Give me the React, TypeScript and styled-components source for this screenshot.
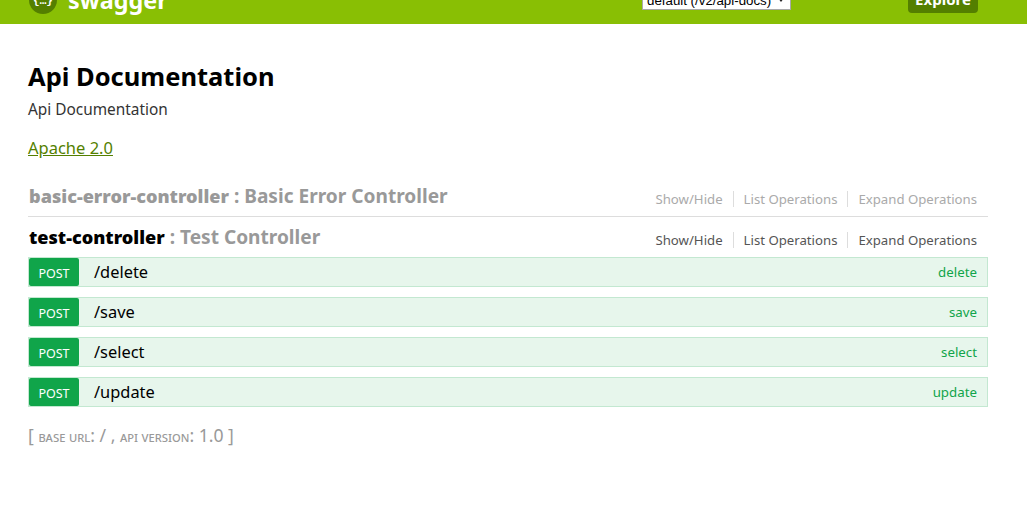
import React from 'react'
import styled, { createGlobalStyle } from 'styled-components'

const GlobalStyle = createGlobalStyle`
  html, body {
    margin: 0;
    padding: 0;
    background: #ffffff;
    font-family: "Noto Sans", "Open Sans", "Noto Sans CJK SC", sans-serif;
    overflow: hidden;
  }
`

const Header = styled.header`
  height: 24px;
  background: #89bf04;
  overflow: hidden;
  display: flex;
  align-items: flex-end;
`

const Logo = styled.div`
  display: flex;
  align-items: center;
  margin-left: 29px;
  margin-bottom: 10px;
  width: 613px;
  flex: none;
  gap: 11px;
  height: 28px;
`

const LogoBadge = styled.svg`
  width: 28px;
  height: 28px;
  flex: none;
`

const LogoText = styled.span`
  color: #ffffff;
  font-size: 23.4px;
  font-weight: 700;
  line-height: 28px;
`

const ApiSelect = styled.div`
  box-sizing: border-box;
  width: 149px;
  height: 20px;
  margin-bottom: 14px;
  flex: none;
  padding: 0 6px 0 4px;
  background: #ffffff;
  border: 1px solid #a9a9a9;
  display: flex;
  align-items: center;
  justify-content: space-between;
  font-family: "Liberation Sans", sans-serif;
  font-size: 13.3px;
  color: #000000;
`

const SelectArrow = styled.span`
  width: 0;
  height: 0;
  border-left: 3px solid transparent;
  border-right: 3px solid transparent;
  border-top: 4px solid #222222;
`

const ExploreButton = styled.div`
  width: 70px;
  height: 28px;
  margin-left: 117px;
  margin-bottom: 11px;
  flex: none;
  border-radius: 4px;
  background: #547f00;
  color: #ffffff;
  font-size: 15px;
  font-weight: 700;
  display: flex;
  align-items: center;
  justify-content: center;
`

const Main = styled.main`
  width: 960px;
  margin-left: 28px;
`

const Info = styled.section`
  padding-top: 34px;
`

const Title = styled.h1`
  margin: 0;
  font-size: 25.5px;
  font-weight: 700;
  line-height: 36px;
  color: #000000;
`

const Description = styled.p`
  margin: 5px 0 0;
  font-size: 15.4px;
  line-height: 22px;
  color: #333333;
`

const License = styled.a`
  display: block;
  margin-top: 16px;
  margin-bottom: 17px;
  font-size: 16.5px;
  line-height: 22px;
  color: #547f00;
  text-decoration: underline;
`

const Resource = styled.section<{ $last?: boolean }>`
  border-bottom: ${(p) => (p.$last ? 'none' : '1px solid #dddddd')};
`

const ResourceHeading = styled.div`
  display: flex;
  align-items: center;
  justify-content: space-between;
  height: 40px;
  padding: 0 11px 0 1px;
`

const ResourceTitle = styled.h2<{ $active?: boolean }>`
  margin: 0;
  font-size: 19.1px;
  font-weight: 700;
  line-height: 24px;
  color: #999999;

  & > b {
    font-size: 18.1px;
    color: ${(p) => (p.$active ? '#000000' : '#999999')};
  }
`

const Actions = styled.ul<{ $active?: boolean }>`
  display: flex;
  margin: 5px 0 0;
  padding: 0;
  list-style: none;
  font-size: 13.2px;
  line-height: 16px;
  color: ${(p) => (p.$active ? '#555555' : '#aaaaaa')};
`

const Action = styled.li`
  padding: 0 10px;
  border-right: 1px solid #dddddd;

  &:last-child {
    padding-right: 0;
    border-right: none;
  }
`

const Operations = styled.div`
  display: flex;
  flex-direction: column;
  gap: 10px;
`

const Operation = styled.div`
  box-sizing: border-box;
  height: 30px;
  display: flex;
  align-items: center;
  padding: 0 10px 0 0;
  background: #e7f6ec;
  border: 1px solid #c3e8d1;
`

const Method = styled.span`
  width: 50px;
  height: 28px;
  flex: none;
  border-radius: 2px;
  background: #10a54a;
  color: #ffffff;
  font-size: 12.5px;
  padding-top: 2px;
  box-sizing: border-box;
  display: flex;
  align-items: center;
  justify-content: center;
`

const Path = styled.span`
  margin-left: 15px;
  flex: 1;
  font-size: 16.4px;
  line-height: 28px;
  height: 28px;
  color: #000000;
`

const Summary = styled.span`
  font-size: 13.3px;
  color: #10a54a;
`

const Footer = styled.footer`
  margin-top: 17px;
  font-size: 17.6px;
  line-height: 22px;
  color: #999999;
`

const FooterLabel = styled.span`
  font-size: 13.8px;
  font-variant: small-caps;
`

const ops = ['delete', 'save', 'select', 'update']

function ActionList({ active }: { active?: boolean }) {
  return (
    <Actions $active={active}>
      <Action>Show/Hide</Action>
      <Action>List Operations</Action>
      <Action>Expand Operations</Action>
    </Actions>
  )
}

export default function App() {
  return (
    <>
      <GlobalStyle />
      <Header>
        <Logo>
          <LogoBadge viewBox="0 0 28 28">
            <circle cx="14" cy="14" r="14" fill="#547f00" />
            <text x="14" y="18" textAnchor="middle" fontSize="11" fontWeight="700" fill="#ffffff" fontFamily="Liberation Mono, monospace">{'{…}'}</text>
          </LogoBadge>
          <LogoText>swagger</LogoText>
        </Logo>
        <ApiSelect>
          default (/v2/api-docs)
          <SelectArrow />
        </ApiSelect>
        <ExploreButton>Explore</ExploreButton>
      </Header>
      <Main>
        <Info>
          <Title>Api Documentation</Title>
          <Description>Api Documentation</Description>
          <License>Apache 2.0</License>
        </Info>
        <Resource>
          <ResourceHeading>
            <ResourceTitle>
              <b>basic-error-controller</b> : Basic Error Controller
            </ResourceTitle>
            <ActionList />
          </ResourceHeading>
        </Resource>
        <Resource $last>
          <ResourceHeading>
            <ResourceTitle $active>
              <b>test-controller</b> : Test Controller
            </ResourceTitle>
            <ActionList active />
          </ResourceHeading>
          <Operations>
            {ops.map((op) => (
              <Operation key={op}>
                <Method>POST</Method>
                <Path>/{op}</Path>
                <Summary>{op}</Summary>
              </Operation>
            ))}
          </Operations>
        </Resource>
        <Footer>
          [ <FooterLabel>base url</FooterLabel>: / , <FooterLabel>api version</FooterLabel>: 1.0 ]
        </Footer>
      </Main>
    </>
  )
}
